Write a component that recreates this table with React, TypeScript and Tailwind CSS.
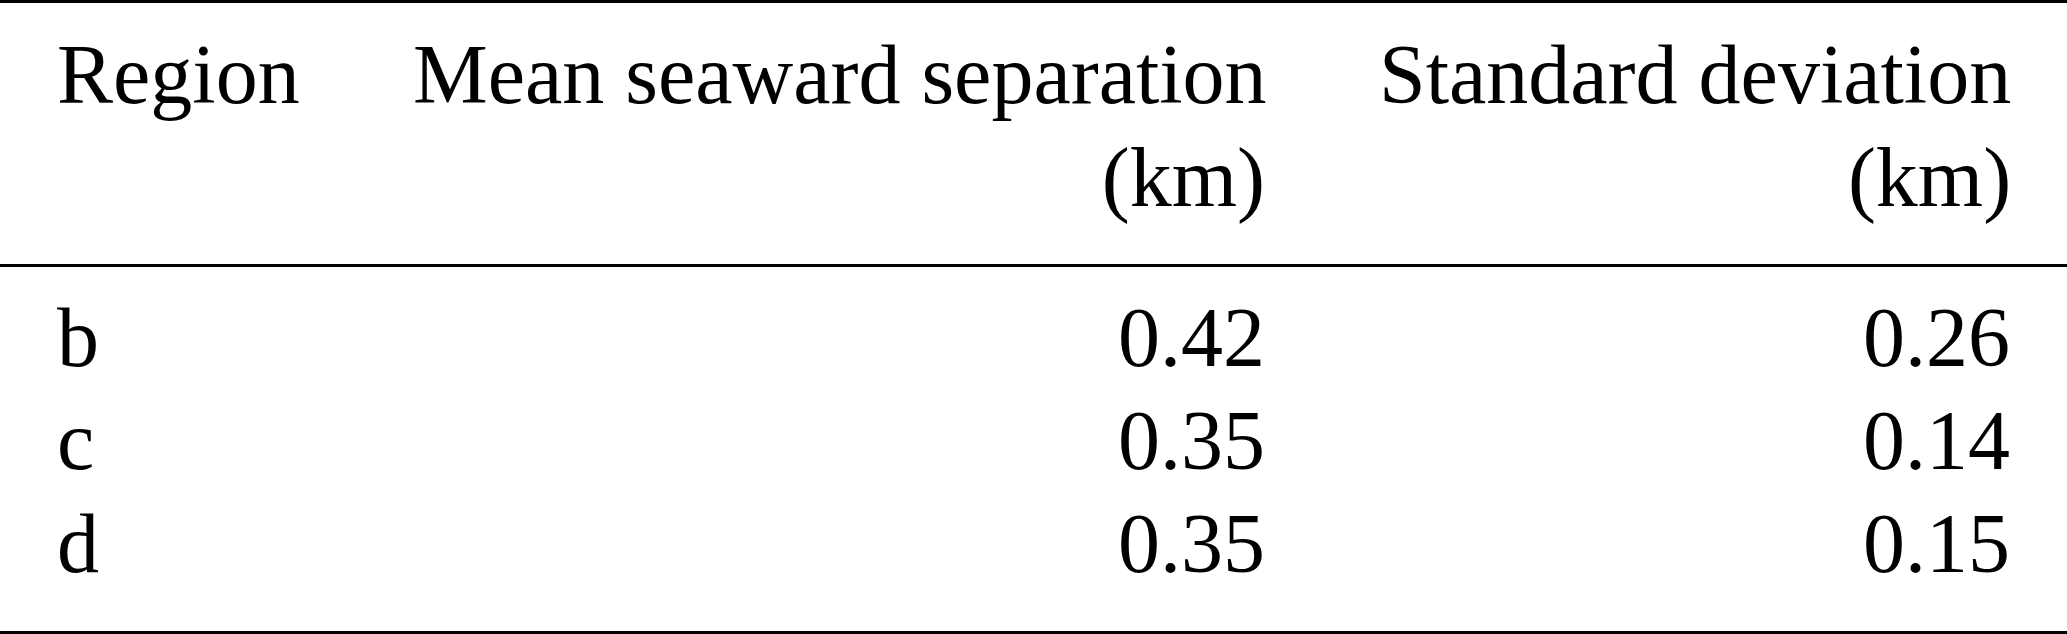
export default function App() {
  const rows = [
    { region: "b", mean: "0.42", sd: "0.26" },
    { region: "c", mean: "0.35", sd: "0.14" },
    { region: "d", mean: "0.35", sd: "0.15" },
  ];

  return (
    <div className="w-[2067px] h-[634px] bg-white text-black font-['Liberation_Serif',serif] text-[84px] leading-[103px]">
      <div className="border-y-[3px] border-black">
        {/* Header */}
        <div className="flex pt-[20px] pb-[35px]">
          <div className="w-[356px] px-[57px] whitespace-nowrap">Region</div>
          <div className="w-[966px] px-[57px] text-right whitespace-nowrap">
            Mean seaward separation
            <br />
            (km)
          </div>
          <div className="flex-1 px-[57px] text-right whitespace-nowrap">
            Standard deviation
            <br />
            (km)
          </div>
        </div>

        {/* Body */}
        <div className="border-t-[3px] border-black pt-[19px] pb-[36px]">
          {rows.map((r) => (
            <div key={r.region} className="flex">
              <div className="w-[356px] px-[57px]">{r.region}</div>
              <div className="w-[966px] px-[57px] text-right">{r.mean}</div>
              <div className="flex-1 px-[57px] text-right">{r.sd}</div>
            </div>
          ))}
        </div>
      </div>
    </div>
  );
}
